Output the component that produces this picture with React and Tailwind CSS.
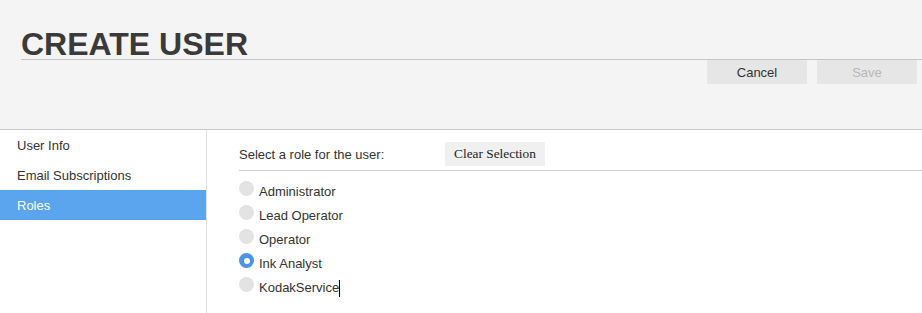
const roles = ["Administrator", "Lead Operator", "Operator", "Ink Analyst", "KodakService"];

const navItems = ["User Info", "Email Subscriptions", "Roles"];

export default function App() {
  const selected = "Ink Analyst";
  const active = "Roles";

  return (
    <div className="w-[922px] h-[313px] bg-white font-['Liberation_Sans',Arial,sans-serif] text-[13px] text-[#333] overflow-hidden">
      {/* Header */}
      <div className="h-[130px] bg-[#f4f4f4] border-b border-[#c8c8c8] pl-[21px] pt-[29px]">
        <h1 className="h-[31px] leading-[30px] text-[32px] font-bold text-[#3a3a3a] border-b border-[#c4c4c4]">
          CREATE USER
        </h1>
        <div className="flex justify-end gap-[10px] pr-[5px]">
          <button className="w-[100px] h-[24px] pt-[2px] bg-[#e6e6e6] text-[13px] text-[#333]">
            Cancel
          </button>
          <button className="w-[100px] h-[24px] pt-[2px] bg-[#e6e6e6] text-[13px] text-[#b8b8b8]" disabled>
            Save
          </button>
        </div>
      </div>

      {/* Body */}
      <div className="flex h-[183px]">
        <div className="w-[207px] border-r border-[#e2e2e2]">
          {navItems.map((item) => (
            <div
              key={item}
              className={
                item === active
                  ? "h-[30px] pt-[2px] leading-[28px] pl-[17px] bg-[#5ba4ee] text-white"
                  : "h-[30px] pt-[2px] leading-[28px] pl-[17px] text-[#333]"
              }
            >
              {item}
            </div>
          ))}
        </div>

        <div className="flex-1 pl-[32px]">
          <div className="flex items-center pt-[12px] pb-[4px] border-b border-[#cfcfcf]">
            <span className="w-[206px] pt-[2px]">Select a role for the user:</span>
            <button className="w-[100px] h-[24px] bg-[#f0f0f0] font-['Liberation_Serif',serif] text-[13.33px] text-[#222]">
              Clear Selection
            </button>
          </div>

          <div className="pt-[8px]">
            {roles.map((r) => (
              <div key={r} className="flex items-start h-[24px]">
                {r === selected ? (
                  <span className="mt-[2px] w-[15px] h-[15px] rounded-full bg-[#4b95e6] flex items-center justify-center">
                    <span className="w-[6px] h-[6px] rounded-full bg-white" />
                  </span>
                ) : (
                  <span className="mt-[2px] w-[15px] h-[15px] rounded-full bg-[#e3e3e3]" />
                )}
                <span className="ml-[5px] mt-[1px] leading-[24px] flex items-center">
                  {r}
                  {r === "KodakService" && <span className="inline-block w-px h-[17px] bg-black" />}
                </span>
              </div>
            ))}
          </div>
        </div>
      </div>
    </div>
  );
}
